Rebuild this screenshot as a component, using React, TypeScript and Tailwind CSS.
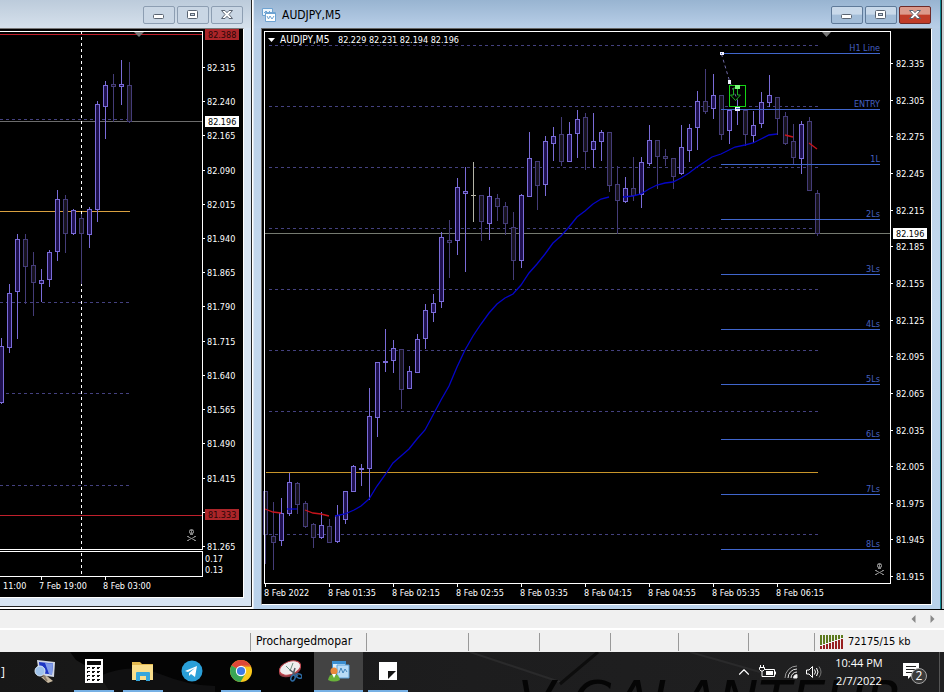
import type { ReactNode } from "react";
import { ChevronUp } from "lucide-react";

// x, high, body top, body bottom, low, rising
type Candle = [number, number, number, number, number, 0 | 1];

const M30_CANDLES: Candle[] = [
  [1, 338, 346, 402, 403, 1],
  [9, 284, 293, 347, 352, 1],
  [17, 234, 239, 291, 338, 1],
  [25, 234, 239, 266, 303, 0],
  [33, 252, 265, 282, 315, 0],
  [41, 269, 280, 283, 301, 1],
  [49, 250, 252, 279, 286, 1],
  [57, 190, 199, 251, 260, 1],
  [65, 195, 199, 233, 252, 0],
  [73, 209, 210, 233, 234, 1],
  [81, 214, 218, 233, 283, 0],
  [89, 207, 209, 234, 247, 1],
  [97, 101, 104, 209, 221, 1],
  [105, 81, 85, 106, 138, 1],
  [113, 74, 84, 86, 121, 0],
  [121, 60, 84, 86, 104, 1],
  [129, 62, 85, 121, 122, 0],
];

const M5_CANDLES: Candle[] = [
  [265, 491, 491, 534, 563, 0],
  [273, 502, 536, 542, 569, 0],
  [281, 498, 513, 540, 545, 1],
  [289, 473, 482, 513, 515, 1],
  [297, 482, 483, 504, 513, 0],
  [305, 501, 503, 526, 527, 0],
  [313, 523, 524, 537, 547, 0],
  [321, 512, 525, 537, 538, 1],
  [329, 519, 526, 542, 542, 0],
  [337, 505, 515, 541, 542, 1],
  [345, 491, 491, 519, 523, 1],
  [353, 465, 466, 491, 491, 1],
  [361, 464, 468, 469, 485, 1],
  [369, 388, 416, 468, 499, 1],
  [377, 362, 362, 417, 436, 1],
  [385, 329, 361, 362, 371, 1],
  [393, 340, 348, 360, 372, 1],
  [401, 349, 349, 389, 408, 0],
  [409, 366, 371, 388, 388, 1],
  [417, 334, 339, 372, 372, 1],
  [425, 304, 310, 338, 348, 1],
  [433, 294, 303, 312, 321, 1],
  [441, 232, 237, 301, 307, 1],
  [449, 220, 240, 242, 277, 0],
  [457, 178, 187, 240, 254, 1],
  [465, 167, 191, 193, 271, 1],
  [481, 195, 195, 221, 240, 0],
  [489, 187, 196, 223, 239, 1],
  [497, 194, 198, 206, 220, 0],
  [505, 202, 206, 223, 234, 0],
  [513, 212, 227, 260, 279, 0],
  [521, 194, 195, 260, 267, 1],
  [529, 132, 158, 196, 196, 1],
  [537, 161, 161, 185, 209, 0],
  [545, 136, 141, 184, 195, 1],
  [553, 127, 136, 143, 160, 1],
  [561, 117, 134, 161, 165, 0],
  [569, 122, 134, 161, 161, 1],
  [577, 110, 119, 133, 157, 1],
  [585, 113, 117, 151, 169, 0],
  [593, 113, 141, 149, 167, 1],
  [601, 130, 132, 141, 160, 1],
  [609, 132, 132, 185, 191, 0],
  [617, 166, 184, 200, 233, 0],
  [625, 177, 188, 201, 202, 1],
  [633, 157, 188, 195, 200, 0],
  [641, 157, 162, 194, 207, 1],
  [649, 125, 140, 163, 165, 1],
  [657, 140, 140, 156, 188, 0],
  [665, 149, 156, 158, 165, 0],
  [673, 158, 158, 176, 188, 0],
  [681, 125, 147, 173, 174, 1],
  [689, 124, 128, 150, 161, 1],
  [697, 91, 101, 127, 149, 1],
  [705, 69, 101, 111, 113, 0],
  [713, 74, 95, 108, 118, 1],
  [721, 95, 95, 134, 139, 0],
  [729, 110, 110, 130, 143, 1],
  [737, 100, 107, 109, 124, 1],
  [745, 110, 110, 134, 145, 0],
  [753, 111, 125, 135, 142, 1],
  [761, 92, 102, 123, 127, 1],
  [769, 75, 95, 102, 106, 1],
  [777, 97, 97, 118, 134, 0],
  [785, 112, 116, 143, 144, 0],
  [793, 124, 141, 157, 163, 0],
  [801, 121, 124, 158, 173, 1],
  [809, 117, 121, 190, 190, 0],
  [817, 190, 193, 233, 235, 0],
];

const M30_PRICES = ["82.315", "82.240", "82.165", "82.090", "82.015", "81.940", "81.865", "81.790", "81.715", "81.640", "81.565", "81.490", "81.415", "", "81.265"];
const M5_PRICES = ["82.335", "82.305", "82.275", "82.245", "82.215", "82.185", "82.155", "82.125", "82.095", "82.065", "82.035", "82.005", "81.975", "81.945", "81.915"];
const M5_TIMES = ["8 Feb 2022", "8 Feb 01:35", "8 Feb 02:15", "8 Feb 02:55", "8 Feb 03:35", "8 Feb 04:15", "8 Feb 04:55", "8 Feb 05:35", "8 Feb 06:15"];
const LEVELS = ["H1 Line", "ENTRY", "1L", "2Ls", "3Ls", "4Ls", "5Ls", "6Ls", "7Ls", "8Ls"];

const BLUE_MA = [
  "335,516 345,514 354,510 361,506 369,499 377,486 385,475 393,463 401,456 409,449 417,439 425,430 433,415 441,400 449,386 457,367 465,350 473,336 481,324 489,313 497,304 505,298 513,294 521,285 529,273 537,264 545,254 553,243 561,236 569,227 577,217 585,211 593,204 601,199 609,197",
  "623,197 633,196 641,194 649,189 657,185 665,183 673,182 681,178 689,173 697,167 712,157 721,154 735,147 745,145 753,143 761,139 769,135 777,134",
  "287,509 297,509",
];
const RED_MA = ["265,509 273,512 281,513", "305,510 313,513 321,514 329,516", "785,135 793,137", "809,143 817,149"];

const CHART_FONT = "font-['DejaVu_Sans_Condensed','DejaVu_Sans',sans-serif]";

function Candles({ data }: { data: Candle[] }) {
  return (
    <g shapeRendering="crispEdges">
      {data.map(([x, high, top, bottom, low, up]) => {
        const stroke = up ? "#7a6cd8" : "#443c78";
        return (
          <g key={x} stroke={stroke}>
            <line x1={x + 0.5} x2={x + 0.5} y1={high} y2={low + 1} />
            <rect x={x - 1.5} y={top + 0.5} width={4} height={bottom - top} fill={up ? "#1f1150" : "#17131f"} />
          </g>
        );
      })}
    </g>
  );
}

function Skull({ x, y }: { x: number; y: number }) {
  return (
    <g transform={`translate(${x} ${y})`} fill="#858585">
      <path d="M2 2.500C2 1 3 0 4.500 0S7 1 7 2.500V4L6 4.500V6H3V4.500L2 4z" />
      <path d="M3 2h1v1.500H3zM5 2h1v1.500H5z" fill="#000" />
      <path d="M.5 7.500l8 4M8.500 7.500l-8 4" stroke="#858585" />
      <path d="M0 7h2v1H0zM7 7h2v1H7zM0 11h2v1H0zM7 11h2v1H7z" />
    </g>
  );
}

function PriceTag({ x, y, value, fill, color }: { x: number; y: number; value: string; fill: string; color: string }) {
  return (
    <>
      <rect x={x} y={y} width={34} height={11} fill={fill} />
      <text x={x + 3} y={y + 9} fill={color}>{value}</text>
    </>
  );
}

function M30Chart() {
  return (
    <svg viewBox="0 29 243 568" className={`block w-full bg-black text-[9px] ${CHART_FONT}`} role="img" aria-label="AUDJPY M30 chart">
      <g shapeRendering="crispEdges" fill="none">
        {[119, 302, 393, 485].map((y) => (
          <line key={y} x1={0} x2={130} y1={y + 0.5} y2={y + 0.5} stroke="#444180" strokeDasharray="3 3" />
        ))}
        <path d="M0 34.500H202M0 515.500H202" stroke="#c0202c" />
        <path d="M0 121.500H202" stroke="#6c6c6c" />
        <path d="M0 211.500H130" stroke="#d9a040" />
        <path d="M81.500 31V576" stroke="#fff" strokeDasharray="3 3" />
      </g>
      <Candles data={M30_CANDLES} />
      <path d="M134 32h10l-5 5z" fill="#777" />
      <path d="M0 31.500H202.500V549.500H0M0 551.500H202.500V576.500H0M202 512.500h3M41.500 577v3M105.500 577v3" fill="none" stroke="#fff" shapeRendering="crispEdges" />
      <Skull x={187} y={529} />
      <g fill="#fff">
        {M30_PRICES.map((p, i) => {
          const y = Math.round(67 + i * 34.21);
          return p && (
            <g key={p}>
              <rect x={203} y={y} width={2} height={1} />
              <text x={207} y={y + 4}>{p}</text>
            </g>
          );
        })}
        <text x={205} y={562}>0.17</text>
        <text x={205} y={573}>0.13</text>
        <text x={3} y={589}>11:00</text>
        <text x={39} y={589}>7 Feb 19:00</text>
        <text x={103} y={589}>8 Feb 03:00</text>
      </g>
      <PriceTag x={205} y={29} value="82.388" fill="#ab2529" color="#2a0606" />
      <PriceTag x={205} y={116} value="82.196" fill="#fff" color="#000" />
      <PriceTag x={205} y={509} value="81.333" fill="#ab2529" color="#2a0606" />
    </svg>
  );
}

function M5Chart() {
  return (
    <svg viewBox="262 29 669 575" className={`block w-full bg-black text-[9px] ${CHART_FONT}`} role="img" aria-label="AUDJPY M5 chart">
      <g shapeRendering="crispEdges">
        {[45, 106, 167, 228, 289, 350, 411, 534].map((y) => (
          <line key={y} x1={269} x2={818} y1={y + 0.5} y2={y + 0.5} stroke="#444180" strokeDasharray="3 3" />
        ))}
        <path d="M266 472.500H818" stroke="#c8952a" />
        <path d="M265 233.500H890" stroke="#757a70" />
      </g>
      <Candles data={M5_CANDLES} />
      <path d="M473.500 162V222M471 195.500h5" stroke="#b5b5a8" shapeRendering="crispEdges" />
      <g fill="none" strokeWidth={1.3}>
        {BLUE_MA.map((p) => <polyline key={p} points={p} stroke="#0505c8" />)}
        {RED_MA.map((p) => <polyline key={p} points={p} stroke="#c8141c" />)}
      </g>

      {/* trade levels */}
      {LEVELS.map((label, i) => {
        const y = i === 0 ? 53 : 54 + i * 55;
        return (
          <g key={label}>
            <rect x={721} y={y} width={159} height={1} fill="#4066cc" />
            <text x={880} y={y - 2} textAnchor="end" fill="#4660c0">{label}</text>
          </g>
        );
      })}

      {/* sell arrow with its anchors */}
      <path d="M721.500 54L729.500 81L737.500 100" fill="none" stroke="#6f6aa8" strokeDasharray="3 3" />
      <rect x={729.5} y={85.5} width={16} height={21} fill="none" stroke="#15d415" />
      <path d="M733.500 88v7h-3l5 5.500 5-5.500h-3v-7z" fill="none" stroke="#1cb024" />
      <path d="M735 85h5v4h-5z" fill="#7dff7d" />
      <path d="M720 52h4v3h-4zM728 80h3v4h-3zM735 107h5v4h-5z" fill="#eef" />
      <path d="M721 53h1v1h-1zM736 108h4v1h-4z" fill="#3f62bd" />

      <path d="M822 32h9l-4.500 5z" fill="#777" />
      <Skull x={875} y={563} />
      <rect x={264.5} y={31.5} width={626} height={552} fill="none" stroke="#fff" shapeRendering="crispEdges" />
      <g fill="#fff">
        <path d="M268 38h7l-3.500 4z" />
        <text x={280} y={43} className="text-[10px]">AUDJPY,M5</text>
        <text x={338} y={43}>82.229 82.231 82.194 82.196</text>
        {M5_PRICES.map((p, i) => {
          const y = Math.round(63 + i * 36.65);
          return (
            <g key={p}>
              <rect x={891} y={y} width={2} height={1} />
              <text x={896} y={y + 4}>{p}</text>
            </g>
          );
        })}
        {M5_TIMES.map((t, i) => (
          <g key={t}>
            <rect x={265 + i * 64} y={584} width={1} height={3} />
            <text x={264 + i * 64} y={596}>{t}</text>
          </g>
        ))}
      </g>
      <PriceTag x={893} y={228} value="82.196" fill="#fff" color="#000" />
    </svg>
  );
}

function CaptionButton({ label, className, children }: { label: string; className: string; children: ReactNode }) {
  return (
    <button aria-label={label} className={`flex h-[18px] w-8 items-center justify-center rounded-[2px] border ${className}`}>
      <svg width="14" height="12" viewBox="0 0 14 12" fill="none">{children}</svg>
    </button>
  );
}

function CaptionButtons({ active }: { active?: boolean }) {
  const normal = active
    ? "border-[#5f7a99] bg-linear-to-b from-[#c9d9ea] from-45% to-[#a3bdd8] to-50%"
    : "border-[#8d9eb2] bg-[#c9d6e4]";
  const close = active ? "border-[#6e2a28] bg-linear-to-b from-[#dc9a8c] from-45% to-[#c03c28] to-50%" : normal;
  return (
    <div className="ml-auto flex gap-0.5">
      <CaptionButton label="Minimize" className={normal}>
        <rect x="1.500" y="5.500" width="10" height="4" rx="1" fill="#fff" stroke="#5a6472" />
      </CaptionButton>
      <CaptionButton label="Maximize" className={normal}>
        <rect x="1.500" y="1.500" width="10" height="8" rx="1" fill="#fff" stroke="#5a6472" />
        <rect x="4.500" y="4.500" width="4" height="2" fill="#c9d6e4" stroke="#5a6472" />
      </CaptionButton>
      <CaptionButton label="Close" className={close}>
        <path d="M1.500 1.500H5l2 2.200 2-2.200h3.500L9 5.500l3.500 4H9L7 7.300 5 9.500H1.500L5 5.500z" fill="#fff" stroke="#5a6472" />
      </CaptionButton>
    </div>
  );
}

function TaskButton({ label, state = "", children }: { label: string; state?: "" | "open" | "active"; children: ReactNode }) {
  return (
    <button aria-label={label} className={`flex h-10 w-[49px] flex-col items-center ${state === "active" ? "bg-[#434343]" : ""}`}>
      <span className="flex flex-1 items-center justify-center">
        <svg width="24" height="24" viewBox="0 0 24 24">{children}</svg>
      </span>
      <span className={`h-0.5 ${state === "active" ? "w-full bg-[#76b0e4]" : state === "open" ? "w-10 bg-[#76b0e4]" : ""}`} />
    </button>
  );
}

function Taskbar() {
  return (
    <footer className="relative flex h-10 items-center overflow-hidden bg-linear-to-r from-[#171717] via-[#1d1d1e] to-[#202021] text-white">
      {/* wallpaper showing through the bar */}
      <svg className="absolute inset-0 h-full w-full" viewBox="0 0 944 40" preserveAspectRatio="none" aria-hidden="true">
        <path d="M70 0H315V40H130Q100 22 76 8Z" fill="#040404" />
        <path d="M100 24Q130 10 160 22T215 34V40H110Z" fill="#101011" />
        <path d="M470 0L560 30M690 0L760 20" stroke="#2a2a2b" strokeWidth="2" />
        <path d="M598 0L560 32" stroke="#0d0d0d" strokeWidth="3" />
        <text x="518" y="67" fill="#050505" className="font-['DejaVu_Sans',sans-serif] text-[54px] italic">V GALANTEUR</text>
      </svg>
      <div className="relative flex w-full items-center">
        <span className="w-5 pl-px font-['Open_Sans',sans-serif] text-xs">]</span>
        <TaskButton label="Remote desktop">
          <path d="M4 1l18 2-1 15-15-2z" fill="#cfd6e4" />
          <path d="M6 3l14 1.500-1 11-12-1.500z" fill="#1c35c4" />
          <path d="M12 4l8 .5-1 11-3-.5z" fill="#7f9be8" />
          <path d="M8 18l6-1 6 5-5 2z" fill="#c7b9a0" />
          <circle cx="7" cy="12" r="5" fill="#9fc2ea" stroke="#dbe8f6" />
          <path d="M10 16l4 6" stroke="#8b7d6a" strokeWidth="2" />
        </TaskButton>
        <TaskButton label="Calculator" state="open">
          <path d="M3 0h18v24H3z" fill="#fff" />
          <path d="M5 2h14v4H5z" fill="#0c0c0c" />
          {[9, 13, 17, 21].map((y) => (
            <path key={y} d={`M5 ${y - 1}h3v1H6v1H5zM10 ${y - 1}h3v1h-1v1h-2zM15 ${y - 1}h3v1h-1v1h-2z`} fill="#111" />
          ))}
        </TaskButton>
        <TaskButton label="File Explorer" state="open">
          <path d="M1 3h8l2 2h11v4H1z" fill="#e3b94f" />
          <path d="M1 6h21v15H1z" fill="#f9de8c" />
          <path d="M5 22v-8q0-1 1-1h12q1 0 1 1v8h-4v-5H9v5z" fill="#35a7dc" />
        </TaskButton>
        <TaskButton label="Telegram">
          <circle cx="12" cy="12" r="10.500" fill="#2a9fd8" />
          <path d="M5 12l12-5-2 11-4-3-2 2v-3l6-5-7 4z" fill="#fff" />
        </TaskButton>
        <TaskButton label="Chrome" state="open">
          <circle cx="12" cy="12" r="11" fill="#fbc91c" />
          <path d="M12 12L2.500 6.500A11 11 0 0 1 21.500 6.500H12z" fill="#df4738" />
          <path d="M12 12L2.500 6.500A11 11 0 0 0 11.500 23L16.500 14.500z" fill="#3aa556" />
          <path d="M12 6.500h9.500l.4 1H12z" fill="#df4738" />
          <circle cx="12" cy="12" r="5.200" fill="#fff" />
          <circle cx="12" cy="12" r="4.100" fill="#3f7be6" />
        </TaskButton>
        <TaskButton label="Snipping Tool">
          <ellipse cx="12" cy="11" rx="11.500" ry="6.500" fill="#8e3b43" transform="rotate(-20 12 11)" />
          <ellipse cx="12" cy="9" rx="11" ry="6.500" fill="#efeeee" stroke="#c0444c" transform="rotate(-20 12 9)" />
          <path d="M8 7l5 5M15 4l-3 8" stroke="#6c8f80" />
          <path d="M12 11l8 6M17 9l-2 7" stroke="#555e66" strokeWidth="1.500" />
          <ellipse cx="15" cy="19" rx="2" ry="3" fill="none" stroke="#2d6ba4" strokeWidth="1.500" transform="rotate(25 15 19)" />
          <ellipse cx="21" cy="17" rx="3" ry="2" fill="none" stroke="#2d6ba4" strokeWidth="1.500" transform="rotate(25 21 17)" />
        </TaskButton>
        <TaskButton label="MetaTrader" state="active">
          <path d="M5 2h14v13H5z" fill="#3d8fd0" />
          <path d="M6 5h12v9H6z" fill="#d8ecfa" />
          <path d="M10 6h12v13H10z" fill="#b9dcf6" stroke="#5da2da" />
          <path d="M12 14l2-5 2 5 2-4 2 3" fill="none" stroke="#4285bc" />
          <circle cx="7" cy="12" r="3.500" fill="#e88a3c" />
          <path d="M1 21q1-6 6-6t6 6q-6 3-12 0z" fill="#69b23a" />
          <path d="M5 15l2 4 2-4z" fill="#fff" />
        </TaskButton>
        <TaskButton label="Sticky Notes" state="open">
          <path d="M3 3h18v18H3z" fill="#fff" />
          <path d="M12 20v-8h8z" fill="#141414" />
        </TaskButton>

        <div className="ml-auto flex items-center">
          <button aria-label="Show hidden icons" className="w-6"><ChevronUp size={18} strokeWidth={1.500} /></button>
          <svg width="17" height="14" viewBox="0 0 17 14" fill="none" stroke="#fff" aria-label="Battery">
            <path d="M5.500 4.500h10v7h-10M16.500 6.500v3" />
            <path d="M7 6h7v4H7z" fill="#fff" stroke="none" />
            <path d="M1.500 0v2M4.500 0v2M.5 2.500h5v2l-1.500 1.500h-2L.5 4.500zM3 6v5.500h3" />
          </svg>
          <svg className="ml-2" width="14" height="14" viewBox="0 0 14 14" fill="none" stroke="#e6e6e6" aria-label="Network">
            <path d="M1 13A12 12 0 0 1 13 1" stroke="#999" />
            <path d="M4 13a9 9 0 0 1 9-9M7 13a6 6 0 0 1 6-6" />
            <path d="M9.500 13a3.500 3.500 0 0 1 3.500-3.500V13z" fill="#fff" />
          </svg>
          <svg className="ml-2" width="17" height="14" viewBox="0 0 17 14" fill="none" stroke="#fff" aria-label="Volume">
            <path d="M.5 5v4h2.500l3.500 3.500v-11L3 5z" />
            <path d="M8.500 4.500q2 2.500 0 5M10.500 3q3 4 0 8" />
            <path d="M13 1.500q4 5.500 0 11" stroke="#777" />
          </svg>
          <time className="ml-1.5 w-[60px] text-center font-['Open_Sans',sans-serif] text-[11px] leading-[18px] whitespace-nowrap">
            10:44 PM
            <br />
            2/7/2022
          </time>
          <button aria-label="2 notifications" className="mr-3 ml-3.5">
            <svg width="24" height="26" viewBox="0 0 24 26" className="font-['Open_Sans',sans-serif] text-xs">
              <path d="M0 4h16v13H8l-3 3v-3H0z" fill="#fff" />
              <path d="M3 7.500h10M3 10.500h10M3 13.500h6" stroke="#222" />
              <circle cx="16" cy="17" r="7.500" fill="#3b3b3b" stroke="#a5a5a5" />
              <text x="16" y="21" textAnchor="middle" fill="#fff">2</text>
            </svg>
          </button>
          <span className="mr-1 h-10 w-px bg-[#555]" />
        </div>
      </div>
    </footer>
  );
}

export default function App() {
  return (
    <div className="flex min-h-screen flex-col bg-[#f0f0f0] text-black">
      <main className="flex items-start border-b border-black bg-white">
        <section className="flex w-[252px] shrink-0 flex-col border-r border-b border-[#222] bg-[#d7e4f2] pb-2">
          <header className="flex h-7 items-center bg-linear-to-b from-[#bccbdb] to-[#d6e1ec] pt-0.5 pr-2">
            <CaptionButtons />
          </header>
          <div className="mr-[7px] border-t border-r border-b border-t-[#777] border-r-white border-b-white">
            <M30Chart />
          </div>
        </section>
        <section className="ml-px flex min-w-0 flex-1 flex-col border-l border-[#dfe9f4] bg-linear-to-b from-[#b5cce5] via-[#c5d9ee] to-[#b9d1ea] pr-2 pb-1">
          <header className="-mr-2 flex h-7 items-center bg-linear-to-b from-[#98b4d1] to-[#b9cfe8] pt-0.5 pr-[9px] pl-2">
            <svg width="14" height="14" viewBox="0 0 14 14" fill="none" aria-hidden="true">
              <path d="M.5.5h10v7H.5z" fill="#eef6fd" stroke="#6ea3d2" />
              <path d="M2 5l2-2 2 2 2-2" stroke="#6ea3d2" />
              <path d="M3.500 4.500h10v9h-10z" fill="#fff" stroke="#6ea3d2" />
              <path d="M3 5.500h11" stroke="#6ea3d2" />
              <path d="M5 8l1.500 3L8 8l2 3 2-3" stroke="#6ea3d2" />
            </svg>
            <h1 className="ml-1.5 font-['DejaVu_Sans_Condensed','DejaVu_Sans',sans-serif] text-xs">AUDJPY,M5</h1>
            <CaptionButtons active />
          </header>
          <div className="ml-[7px] border-t border-r border-b border-l border-t-[#666] border-r-white border-b-white border-l-[#777]">
            <M5Chart />
          </div>
        </section>
        <div className="w-1 self-stretch border-r-2 border-l border-r-[#c9cdd0] border-l-[#168a94] bg-[#1c2226]" />
      </main>

      <nav className="flex h-5 items-center justify-end gap-3.5 border-b-2 border-white pr-[9px]" aria-label="Chart tabs">
        <button aria-label="Scroll tabs left">
          <svg width="5" height="8" viewBox="0 0 5 8"><path d="M4.500 0v8L.5 4z" fill="#888" /></svg>
        </button>
        <button aria-label="Scroll tabs right">
          <svg width="5" height="8" viewBox="0 0 5 8"><path d="M.5 0v8l4-4z" fill="#888" /></svg>
        </button>
      </nav>

      <div className="flex min-h-[22px] flex-1 items-center pt-0.5 font-['DejaVu_Sans_Condensed','DejaVu_Sans',sans-serif] text-xs">
        <div className="flex-1" />
        <div className="h-[18px] w-[116px] border-l border-[#999] pl-[5px]">Prochargedmopar</div>
        <div className="h-[18px] w-[102px] border-l border-[#999]" />
        <div className="h-[18px] w-[71px] border-l border-[#999]" />
        <div className="h-[18px] w-[71px] border-l border-[#999]" />
        <div className="h-[18px] w-[68px] border-l border-[#999]" />
        <div className="h-[18px] w-[70px] border-l border-[#999]" />
        <div className="h-[18px] w-[66px] border-l border-[#999]" />
        <div className="flex h-[18px] w-[130px] items-center gap-1 border-l border-[#999] pl-[5px] text-[11px] whitespace-nowrap">
          <svg width="24" height="14" viewBox="0 0 24 14" aria-hidden="true">
            {[0, 3, 6, 9, 12, 15, 18, 21].map((x) => (
              <g key={x}>
                <rect x={x} y={0} width={2} height={10 - x / 3} fill="#5d7a1e" />
                <rect x={x} y={11 - x / 3} width={2} height={3 + x / 3} fill="#982020" />
              </g>
            ))}
          </svg>
          72175/15 kb
        </div>
      </div>

      <Taskbar />
    </div>
  );
}
